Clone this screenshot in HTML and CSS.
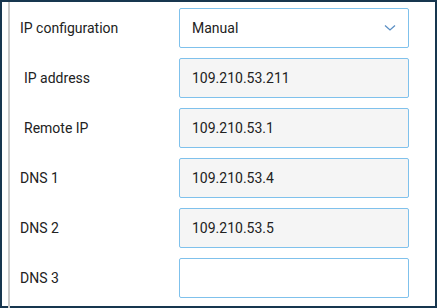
FILE: index.html
```html
<!DOCTYPE html>
<html lang="en">
<head>
    <meta charset="UTF-8">
    <meta name="viewport" content="width=device-width, initial-scale=1.0">
    <link rel="stylesheet" href="styles.css">
    <title>Network settings</title>
</head>
<body>

<div class="frame">
    <div class="panel">

        <!-- IP configuration -->
        <div class="row">
            <label class="label">IP configuration</label>
            <div class="field select">
                <span>Manual</span>
                <svg class="chevron" width="12" height="8" viewBox="0 0 12 8">
                    <path d="M1 1.5 L6 6 L11 1.5" fill="none" stroke="#5b8fc4" stroke-width="1.3"/>
                </svg>
            </div>
        </div>

        <div class="row">
            <label class="label indent">IP address</label>
            <div class="field disabled">109.210.53.211</div>
        </div>

        <div class="row">
            <label class="label indent">Remote IP</label>
            <div class="field disabled">109.210.53.1</div>
        </div>

        <div class="row">
            <label class="label">DNS 1</label>
            <div class="field disabled">109.210.53.4</div>
        </div>

        <div class="row">
            <label class="label">DNS 2</label>
            <div class="field disabled">109.210.53.5</div>
        </div>

        <div class="row">
            <label class="label">DNS 3</label>
            <div class="field"></div>
        </div>

    </div>
</div>

</body>
</html>
```

FILE: styles.css
```css
body {
    margin: 0;
    font-family: Roboto, "Liberation Sans", sans-serif;
    font-size: 14px;
    color: #222;
    background: #fff;
}

.frame {
    width: 437px;
    height: 308px;
    box-sizing: border-box;
    border: 2px solid #17364f;
    padding-left: 6px;
}

.panel {
    height: 100%;
    border-left: 2px solid #cacaca;
    padding: 6px 0 0 10px;
    display: flex;
    flex-direction: column;
    gap: 10px;
}

.row {
    display: grid;
    grid-template-columns: 159px 230px;
    align-items: center;
    height: 40px;
}

.label {
    display: block;
}

.label.indent {
    padding-left: 4px;
}

.field {
    height: 40px;
    box-sizing: border-box;
    border: 1px solid #7fc1ec;
    border-radius: 2px;
    padding: 0 12px;
    display: flex;
    align-items: center;
    background: #fff;
}

.field.disabled {
    background: #f5f5f5;
}

.select {
    justify-content: space-between;
    padding-right: 12px;
}
```
